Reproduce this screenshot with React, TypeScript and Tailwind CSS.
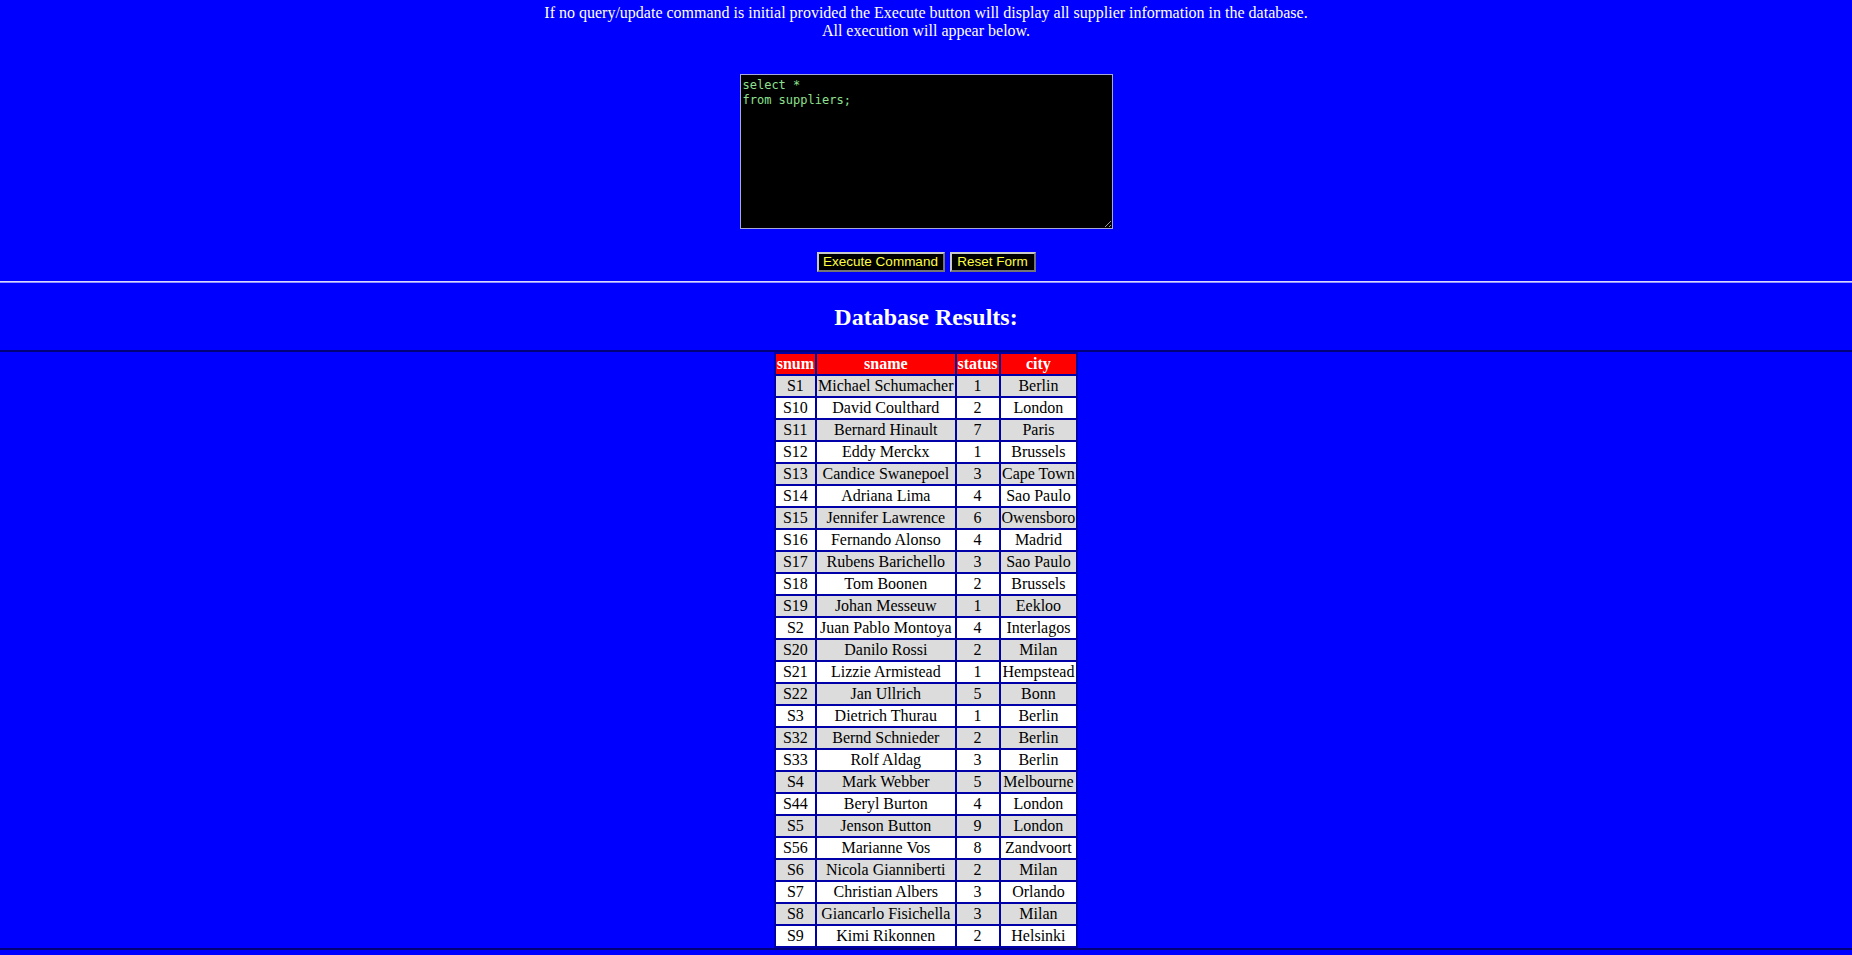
import React from 'react';

const rows: [string, string, string, string][] = [
  ['S1', 'Michael Schumacher', '1', 'Berlin'],
  ['S10', 'David Coulthard', '2', 'London'],
  ['S11', 'Bernard Hinault', '7', 'Paris'],
  ['S12', 'Eddy Merckx', '1', 'Brussels'],
  ['S13', 'Candice Swanepoel', '3', 'Cape Town'],
  ['S14', 'Adriana Lima', '4', 'Sao Paulo'],
  ['S15', 'Jennifer Lawrence', '6', 'Owensboro'],
  ['S16', 'Fernando Alonso', '4', 'Madrid'],
  ['S17', 'Rubens Barichello', '3', 'Sao Paulo'],
  ['S18', 'Tom Boonen', '2', 'Brussels'],
  ['S19', 'Johan Messeuw', '1', 'Eekloo'],
  ['S2', 'Juan Pablo Montoya', '4', 'Interlagos'],
  ['S20', 'Danilo Rossi', '2', 'Milan'],
  ['S21', 'Lizzie Armistead', '1', 'Hempstead'],
  ['S22', 'Jan Ullrich', '5', 'Bonn'],
  ['S3', 'Dietrich Thurau', '1', 'Berlin'],
  ['S32', 'Bernd Schnieder', '2', 'Berlin'],
  ['S33', 'Rolf Aldag', '3', 'Berlin'],
  ['S4', 'Mark Webber', '5', 'Melbourne'],
  ['S44', 'Beryl Burton', '4', 'London'],
  ['S5', 'Jenson Button', '9', 'London'],
  ['S56', 'Marianne Vos', '8', 'Zandvoort'],
  ['S6', 'Nicola Gianniberti', '2', 'Milan'],
  ['S7', 'Christian Albers', '3', 'Orlando'],
  ['S8', 'Giancarlo Fisichella', '3', 'Milan'],
  ['S9', 'Kimi Rikonnen', '2', 'Helsinki'],
];

export default function App() {
  return (
    <div className="min-h-screen bg-[#0000ff] text-white font-['Liberation_Serif',serif] text-[16px] leading-[18px] overflow-hidden">
      {/* intro text */}
      <div className="text-center pt-[4px]">
        <p>If no query/update command is initial provided the Execute button will display all supplier information in the database.</p>
        <p>All execution will appear below.</p>
      </div>

      {/* command form */}
      <div className="flex flex-col items-center pt-[34px]">
        <textarea
          defaultValue={'select *\nfrom suppliers;'}
          className="w-[373px] h-[155px] bg-black text-[#8fe08f] border border-[#a8a8d8] px-[2px] pt-[3px] font-['DejaVu_Sans_Mono',monospace] text-[12px] leading-[15px] resize"
        />
        <div className="flex gap-[5px] mt-[23px]">
          <button className="h-[20px] w-[128px] bg-black text-[#ffff40] border-2 border-[#c8c8c8] [border-style:outset] font-['Liberation_Sans',sans-serif] text-[13.5px] leading-[14px]">
            Execute Command
          </button>
          <button className="h-[20px] w-[86px] bg-black text-[#ffff40] border-2 border-[#c8c8c8] [border-style:outset] font-['Liberation_Sans',sans-serif] text-[13.5px] leading-[14px]">
            Reset Form
          </button>
        </div>
      </div>

      <div className="mt-[9px] border-t border-t-[#d8d8ff] border-b border-b-[#9090ff]" />

      {/* results */}
      <h2 className="text-center font-bold text-[24px] leading-[28px] pt-[20px] pb-[19px]">Database Results:</h2>

      <div className="border-t-2 border-t-[#00007a] border-b-2 border-b-[#00007a]">
        <table className="mx-auto border-separate border-spacing-[2px] bg-[#0000a8] text-center">
          <thead>
            <tr className="bg-[#ff0000] text-white font-bold">
              <th className="px-px h-[20px]">snum</th>
              <th className="px-px h-[20px]">sname</th>
              <th className="px-px h-[20px]">status</th>
              <th className="px-px h-[20px]">city</th>
            </tr>
          </thead>
          <tbody className="text-black">
            {rows.map((r, i) => (
              <tr key={r[0]} className={i % 2 === 0 ? 'bg-[#dcdcdc]' : 'bg-white'}>
                {r.map((c, j) => (
                  <td key={j} className="px-px h-[20px]">{c}</td>
                ))}
              </tr>
            ))}
          </tbody>
        </table>
      </div>
    </div>
  );
}
